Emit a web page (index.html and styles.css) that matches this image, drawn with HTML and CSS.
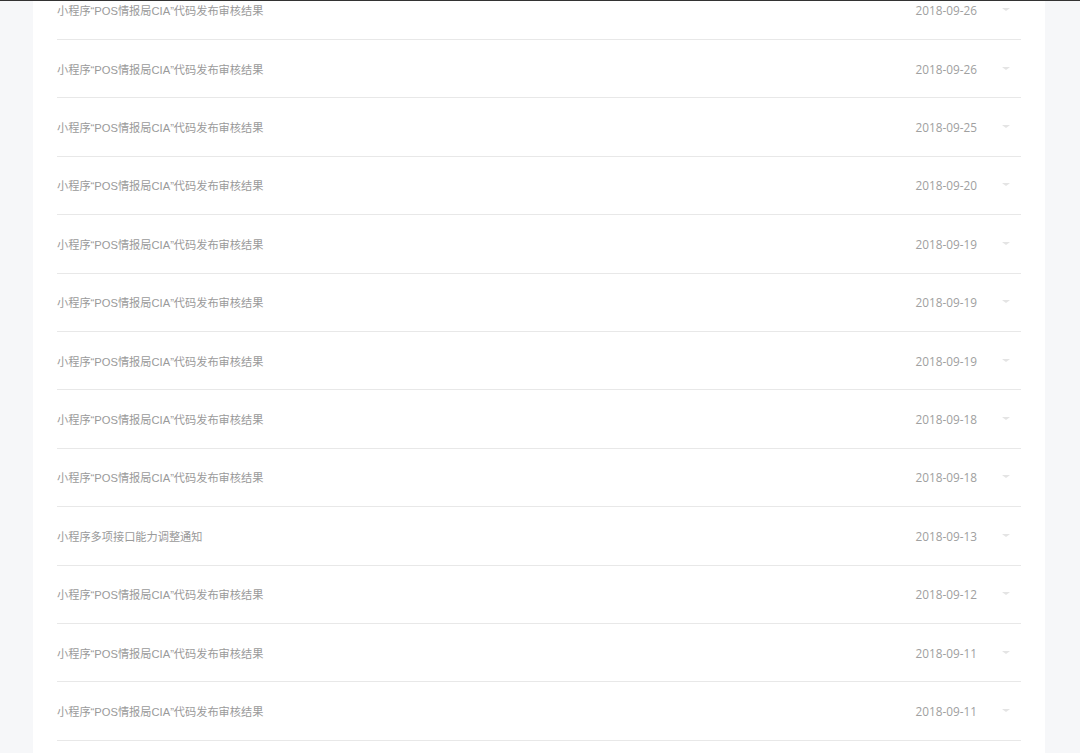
FILE: index.html
```html
<!DOCTYPE html>
<html lang="zh-CN">
<head>
<meta charset="utf-8">
<link rel="stylesheet" href="styles.css">
</head>
<body>
<div class="page">
  <div class="panel">
    <ul class="list">
      <li class="row"><span class="title">小程序“POS情报局CIA”代码发布审核结果</span><span class="date">2018-09-26</span><span class="chev"></span></li>
      <li class="row"><span class="title">小程序“POS情报局CIA”代码发布审核结果</span><span class="date">2018-09-26</span><span class="chev"></span></li>
      <li class="row"><span class="title">小程序“POS情报局CIA”代码发布审核结果</span><span class="date">2018-09-25</span><span class="chev"></span></li>
      <li class="row"><span class="title">小程序“POS情报局CIA”代码发布审核结果</span><span class="date">2018-09-20</span><span class="chev"></span></li>
      <li class="row"><span class="title">小程序“POS情报局CIA”代码发布审核结果</span><span class="date">2018-09-19</span><span class="chev"></span></li>
      <li class="row"><span class="title">小程序“POS情报局CIA”代码发布审核结果</span><span class="date">2018-09-19</span><span class="chev"></span></li>
      <li class="row"><span class="title">小程序“POS情报局CIA”代码发布审核结果</span><span class="date">2018-09-19</span><span class="chev"></span></li>
      <li class="row"><span class="title">小程序“POS情报局CIA”代码发布审核结果</span><span class="date">2018-09-18</span><span class="chev"></span></li>
      <li class="row"><span class="title">小程序“POS情报局CIA”代码发布审核结果</span><span class="date">2018-09-18</span><span class="chev"></span></li>
      <li class="row"><span class="title">小程序多项接口能力调整通知</span><span class="date">2018-09-13</span><span class="chev"></span></li>
      <li class="row"><span class="title">小程序“POS情报局CIA”代码发布审核结果</span><span class="date">2018-09-12</span><span class="chev"></span></li>
      <li class="row"><span class="title">小程序“POS情报局CIA”代码发布审核结果</span><span class="date">2018-09-11</span><span class="chev"></span></li>
      <li class="row"><span class="title">小程序“POS情报局CIA”代码发布审核结果</span><span class="date">2018-09-11</span><span class="chev"></span></li>
    </ul>
  </div>
</div>
</body>
</html>
```
FILE: styles.css
```css
html, body {
  margin: 0;
  padding: 0;
  height: 100%;
  overflow: hidden;
}
body {
  background: #f6f7f9;
  font-family: "Liberation Sans", "Noto Sans CJK SC", sans-serif;
  border-top: 1px solid #333;
  box-sizing: border-box;
}
.page {
  height: 100%;
  padding-left: 33px;
}
.panel {
  width: 1012px;
  height: 100%;
  background: #fff;
  padding: 0 24px;
  box-sizing: border-box;
  overflow: hidden;
}
.list {
  list-style: none;
  margin: -19.4px 0 0 0;
  padding: 0;
}
.row {
  height: 58.4px;
  box-sizing: border-box;
  border-bottom: 1px solid #e8e8e8;
  display: flex;
  align-items: center;
}
.title {
  flex: 1;
  font-size: 11.2px;
  color: #9a9a9a;
}
.date {
  font-family: "Open Sans", "Noto Sans", sans-serif;
  font-size: 11.8px;
  color: #a0a0a0;
}
.chev {
  width: 44px;
  height: 20px;
  position: relative;
}
.chev::after {
  content: "";
  position: absolute;
  left: 25px;
  top: 8px;
  border-left: 4px solid transparent;
  border-right: 4px solid transparent;
  border-top: 3.5px solid #e4e4e4;
}
```
